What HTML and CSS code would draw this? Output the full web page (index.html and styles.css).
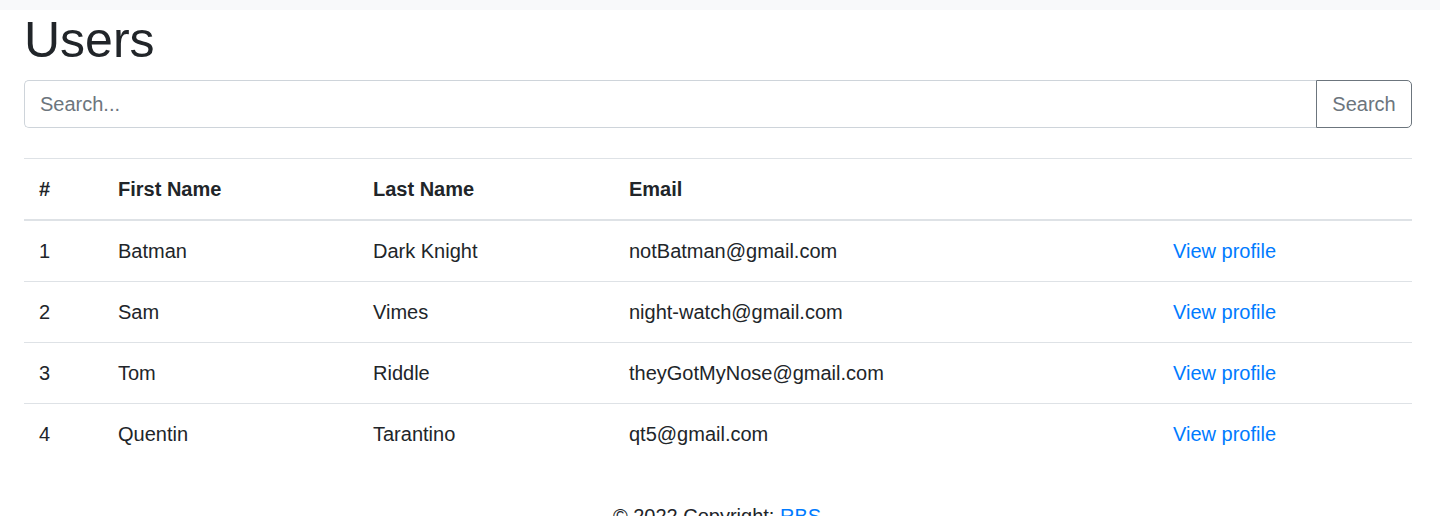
FILE: index.html
```html
<!DOCTYPE html>
<html lang="en">
<head>
<meta charset="utf-8">
<title>Users</title>
<link rel="stylesheet" href="styles.css">
</head>
<body>
<div class="topbar"></div>
<main class="container">
  <h1 class="title">Users</h1>
  <form class="search-group">
    <input class="search-input" type="text" placeholder="Search...">
    <button class="search-btn" type="button">Search</button>
  </form>
  <table class="users">
    <thead>
      <tr>
        <th class="c-num">#</th>
        <th class="c-first">First Name</th>
        <th class="c-last">Last Name</th>
        <th class="c-email">Email</th>
        <th class="c-link"></th>
      </tr>
    </thead>
    <tbody>
      <tr><td>1</td><td>Batman</td><td>Dark Knight</td><td>notBatman@gmail.com</td><td><a href="#">View profile</a></td></tr>
      <tr><td>2</td><td>Sam</td><td>Vimes</td><td>night-watch@gmail.com</td><td><a href="#">View profile</a></td></tr>
      <tr><td>3</td><td>Tom</td><td>Riddle</td><td>theyGotMyNose@gmail.com</td><td><a href="#">View profile</a></td></tr>
      <tr><td>4</td><td>Quentin</td><td>Tarantino</td><td>qt5@gmail.com</td><td><a href="#">View profile</a></td></tr>
    </tbody>
  </table>
</main>
<footer class="footer">© 2022 Copyright: <a href="#">RBS</a></footer>
</body>
</html>
```
FILE: styles.css
```css
* { box-sizing: border-box; }
html { font-size: 20px; }
body {
  margin: 0;
  font-family: "Liberation Sans", Arial, sans-serif;
  font-size: 20px;
  line-height: 1.5;
  color: #212529;
  background: #fff;
}
a { color: #007bff; text-decoration: none; }
.topbar { height: 10px; background: #f8f9fa; }
.container { padding: 0 28px 0 24px; }
.title {
  margin: 0 0 10px;
  font-size: 50px;
  font-weight: 500;
  line-height: 1.2;
}
.search-group { display: flex; margin: 0 0 30px; }
.search-input {
  flex: 1;
  height: 48px;
  padding: 6px 15px;
  font: inherit;
  color: #495057;
  border: 1px solid #ced4da;
  border-right: 0;
  border-radius: 5px 0 0 5px;
  outline: none;
}
.search-input::placeholder { color: #6c757d; }
.search-btn {
  height: 48px;
  width: 96px;
  padding: 6px 15px;
  font: inherit;
  color: #6c757d;
  background: #fff;
  border: 1px solid #6c757d;
  border-radius: 0 5px 5px 0;
}
.users {
  width: 100%;
  border-collapse: collapse;
  table-layout: fixed;
}
.users th, .users td {
  padding: 15px;
  text-align: left;
  vertical-align: top;
  border-top: 1px solid #dee2e6;
}
.users th { font-weight: 700; border-bottom: 2px solid #dee2e6; }
.c-num { width: 79px; }
.c-first { width: 255px; }
.c-last { width: 256px; }
.c-email { width: 544px; }
.footer { text-align: center; padding: 37px 30px 0 24px; }
```
